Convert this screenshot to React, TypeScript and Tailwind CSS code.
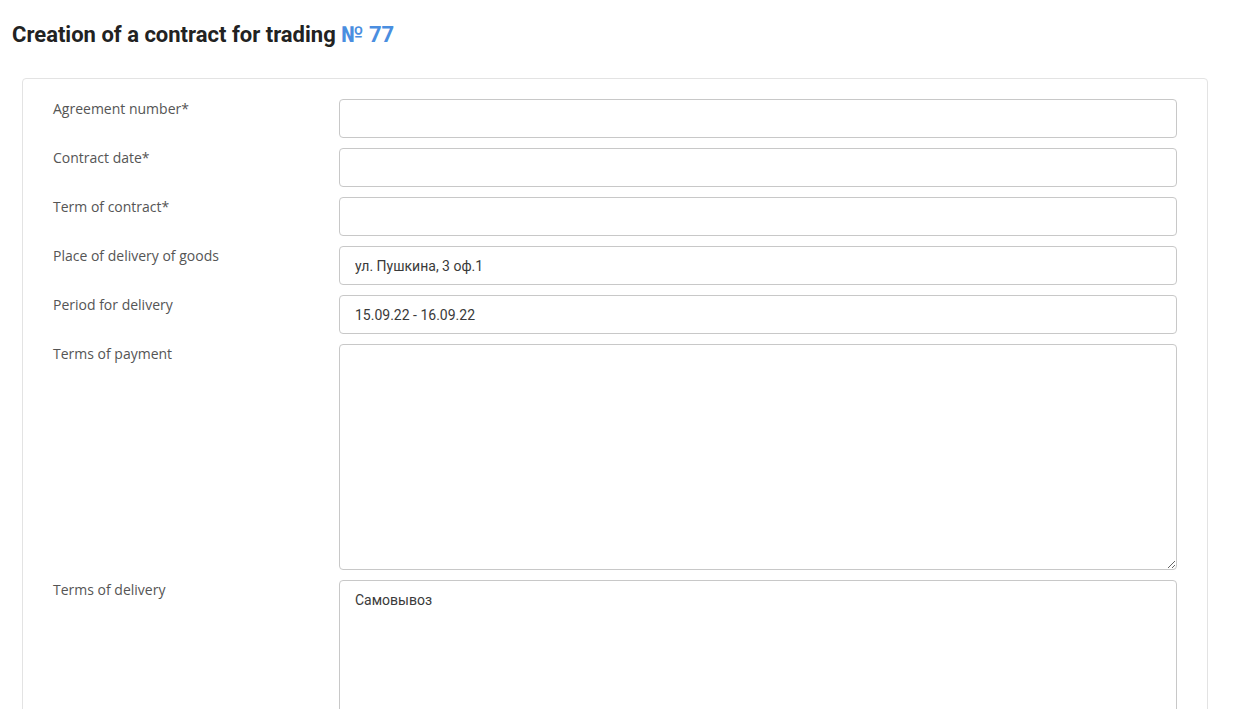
const fields: { label: string; value?: string; area?: boolean }[] = [
  { label: 'Agreement number*' },
  { label: 'Contract date*' },
  { label: 'Term of contract*' },
  { label: 'Place of delivery of goods', value: 'ул. Пушкина, 3 оф.1' },
  { label: 'Period for delivery', value: '15.09.22 - 16.09.22' },
  { label: 'Terms of payment', area: true },
  { label: 'Terms of delivery', value: 'Самовывоз', area: true },
];

export default function App() {
  return (
    <div className="min-h-screen bg-white font-['Roboto',sans-serif]">
      <div className="px-3 pt-5">
        <h1 className="text-[22px] font-bold leading-[30px] text-[#222]">
          Creation of a contract for trading <span className="text-[#4a8ee0]">№ 77</span>
        </h1>
      </div>
      <div className="ml-[22px] mr-[33px] mt-[28px] rounded border border-[#e3e3e3] px-[30px] py-5">
        <div className="flex flex-col gap-[10px]">
          {fields.map((f) => (
            <div key={f.label} className="flex">
              <label className="w-[286px] shrink-0 font-['Open_Sans',sans-serif] text-sm leading-5 text-[#555]">
                {f.label}
              </label>
              {f.area ? (
                <textarea
                  defaultValue={f.value ?? ''}
                  className="h-[226px] flex-1 resize-y rounded border border-[#c8c8c8] px-[15px] py-[9px] text-sm leading-5 text-[#3a3a3a] outline-none"
                />
              ) : (
                <input
                  defaultValue={f.value ?? ''}
                  className="h-[39px] flex-1 rounded border border-[#c8c8c8] px-[15px] text-sm text-[#3a3a3a] outline-none"
                />
              )}
            </div>
          ))}
        </div>
      </div>
    </div>
  );
}
